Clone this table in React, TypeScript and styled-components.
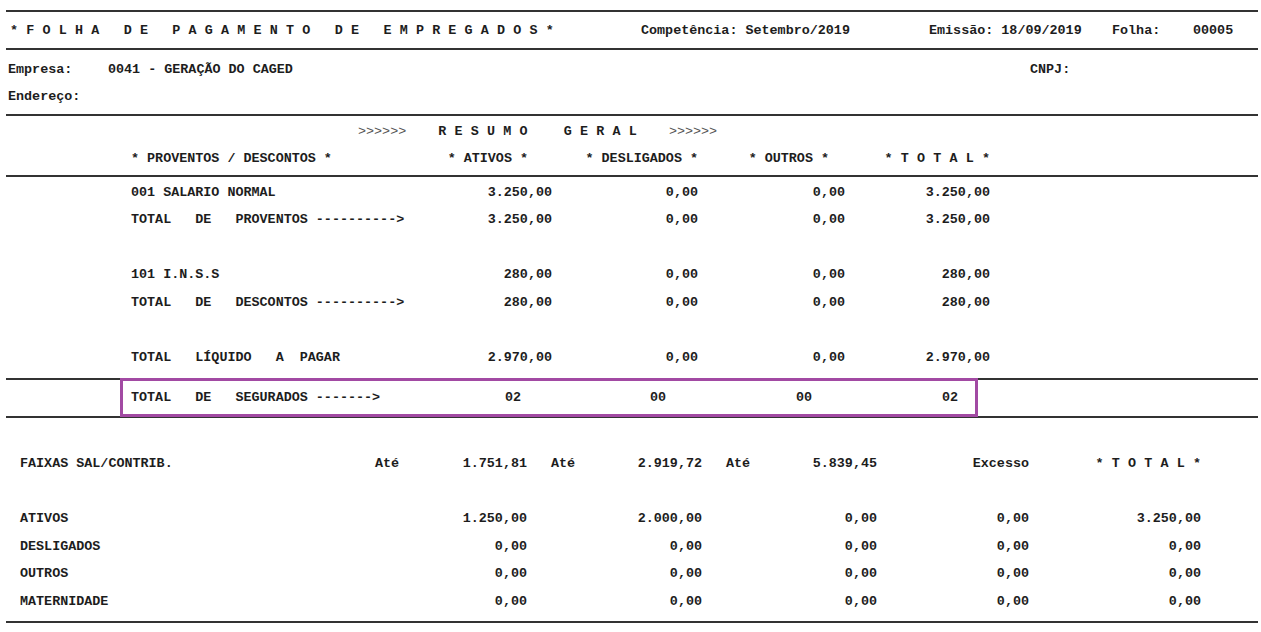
import React from 'react';
import styled, { createGlobalStyle } from 'styled-components';

const GlobalStyle = createGlobalStyle`
  body {
    margin: 0;
    background: #fff;
    color: #1d1d1d;
    font-family: "Liberation Mono", "Courier New", monospace;
    font-weight: bold;
    font-size: 13.4px;
  }
`;

const Page = styled.div`
  width: 1252px;
  padding: 10px 3px 0 6px;
  white-space: pre;
`;

const Rule = styled.div`
  height: 2px;
  background: #333;
`;

/* cabecalho da folha */
const HeaderBand = styled.div`
  display: grid;
  grid-template-columns: 631px 288px 183px 81px auto;
  align-items: center;
  height: 36px;
  padding-left: 4px;
`;

const Spread = styled.span<{ $edge?: boolean; $word?: number }>`
  display: inline-block;
  letter-spacing: 8.2px;
  word-spacing: ${p => p.$word ?? 0}px;
  margin-right: ${p => (p.$edge ? '-8.2px' : '0')};
`;

const InfoBlock = styled.div`
  padding: 6px 0 4px 2px;
`;

const InfoRow = styled.div`
  display: grid;
  grid-template-columns: 100px 922px auto;
  align-items: center;
  height: 27px;
`;

/* resumo geral */
const ResumoHead = styled.div`
  padding: 2px 0 2px 125px;
`;

const TitleLine = styled.div`
  display: flex;
  align-items: center;
  gap: 32px;
  height: 27px;
  padding-left: 227px;
`;

const Arrows = styled.span`
  font-weight: normal;
  color: #555;
`;

const ResumoRow = styled.div<{ $spaced?: boolean }>`
  display: grid;
  grid-template-columns: 309px 112px 146px 147px 145px;
  align-items: center;
  height: 27.5px;
  margin-top: ${p => (p.$spaced ? '27.5px' : '0')};
`;

const HeadCell = styled.span<{ $pad?: number }>`
  text-align: right;
  padding-right: ${p => p.$pad ?? 0}px;
`;

const Num = styled.span`
  text-align: right;
`;

const ResumoBody = styled.div`
  padding: 2px 0 7px 125px;
`;

const SeguradosBand = styled.div`
  border-top: 2px solid #333;
  border-bottom: 2px solid #333;
  height: 36px;
`;

const Highlight = styled.div`
  box-sizing: border-box;
  width: 858px;
  height: 39px;
  margin: -2px 0 0 114px;
  border: 3px solid #a24aa3;
  padding-left: 8px;
  display: grid;
  grid-template-columns: 309px 81px 145px 146px 146px;
  align-items: center;
`;

/* faixas salariais */
const Faixas = styled.div`
  padding: 32px 0 6px 14px;
`;

const FaixaRow = styled.div<{ $spaced?: boolean }>`
  display: grid;
  grid-template-columns: 331px 176px 175px 175px 152px 172px;
  align-items: center;
  height: 27.5px;
  margin-top: ${p => (p.$spaced ? '27.5px' : '0')};
`;

const Ate = styled.span`
  display: flex;
  justify-content: space-between;
  padding-left: 24px;
`;

const resumo = [
  { label: '001 SALARIO NORMAL', v: ['3.250,00', '0,00', '0,00', '3.250,00'] },
  { label: 'TOTAL   DE   PROVENTOS ---------->', v: ['3.250,00', '0,00', '0,00', '3.250,00'] },
  { label: '101 I.N.S.S', v: ['280,00', '0,00', '0,00', '280,00'], spaced: true },
  { label: 'TOTAL   DE   DESCONTOS ---------->', v: ['280,00', '0,00', '0,00', '280,00'] },
  { label: 'TOTAL   LÍQUIDO   A  PAGAR', v: ['2.970,00', '0,00', '0,00', '2.970,00'], spaced: true },
];

const faixas = [
  { label: 'ATIVOS', v: ['1.250,00', '2.000,00', '0,00', '0,00', '3.250,00'] },
  { label: 'DESLIGADOS', v: ['0,00', '0,00', '0,00', '0,00', '0,00'] },
  { label: 'OUTROS', v: ['0,00', '0,00', '0,00', '0,00', '0,00'] },
  { label: 'MATERNIDADE', v: ['0,00', '0,00', '0,00', '0,00', '0,00'] },
];

export default function App() {
  return (
    <>
      <GlobalStyle />
      <Page>
        <Rule />
        <HeaderBand>
          <Spread>*FOLHA DE PAGAMENTO DE EMPREGADOS*</Spread>
          <span>Competência: Setembro/2019</span>
          <span>Emissão: 18/09/2019</span>
          <span>Folha:</span>
          <span>00005</span>
        </HeaderBand>
        <Rule />

        <InfoBlock>
          <InfoRow>
            <span>Empresa:</span>
            <span>0041 - GERAÇÃO DO CAGED</span>
            <span>CNPJ:</span>
          </InfoRow>
          <InfoRow>
            <span>Endereço:</span>
          </InfoRow>
        </InfoBlock>
        <Rule />

        <ResumoHead>
          <TitleLine>
            <Arrows>{'>>>>>>'}</Arrows>
            <Spread $edge $word={12}>RESUMO GERAL</Spread>
            <Arrows>{'>>>>>>'}</Arrows>
          </TitleLine>
          <ResumoRow>
            <span>* PROVENTOS / DESCONTOS *</span>
            <HeadCell $pad={24}>* ATIVOS *</HeadCell>
            <HeadCell>* DESLIGADOS *</HeadCell>
            <HeadCell $pad={16}>* OUTROS *</HeadCell>
            <HeadCell>
              <Spread $edge>*TOTAL*</Spread>
            </HeadCell>
          </ResumoRow>
        </ResumoHead>
        <Rule />

        <ResumoBody>
          {resumo.map(r => (
            <ResumoRow key={r.label} $spaced={r.spaced}>
              <span>{r.label}</span>
              {r.v.map((n, i) => (
                <Num key={i}>{n}</Num>
              ))}
            </ResumoRow>
          ))}
        </ResumoBody>

        <SeguradosBand>
          <Highlight>
            <span>TOTAL   DE   SEGURADOS -------&gt;</span>
            <Num>02</Num>
            <Num>00</Num>
            <Num>00</Num>
            <Num>02</Num>
          </Highlight>
        </SeguradosBand>

        <Faixas>
          <FaixaRow>
            <span>FAIXAS SAL/CONTRIB.</span>
            <Ate>
              <span>Até</span>
              <span>1.751,81</span>
            </Ate>
            <Ate>
              <span>Até</span>
              <span>2.919,72</span>
            </Ate>
            <Ate>
              <span>Até</span>
              <span>5.839,45</span>
            </Ate>
            <Num>Excesso</Num>
            <Num>
              <Spread $edge>*TOTAL*</Spread>
            </Num>
          </FaixaRow>
          {faixas.map((r, idx) => (
            <FaixaRow key={r.label} $spaced={idx === 0}>
              <span>{r.label}</span>
              {r.v.map((n, i) => (
                <Num key={i}>{n}</Num>
              ))}
            </FaixaRow>
          ))}
        </Faixas>
        <Rule />
      </Page>
    </>
  );
}
